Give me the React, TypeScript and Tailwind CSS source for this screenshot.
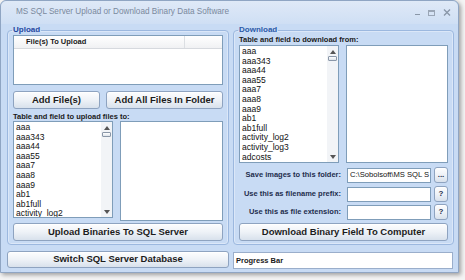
import React from "react";

const upItems = ["aaa", "aaa343", "aaa44", "aaa55", "aaa7", "aaa8", "aaa9", "ab1", "ab1full", "activity_log2"];
const downItems = [...upItems, "activity_log3", "adcosts"];

function Btn({ children, className = "" }: { children: React.ReactNode; className?: string }) {
  return (
    <div
      className={`flex items-center justify-center rounded-[3px] border border-[#8ea3c0] bg-linear-to-b from-[#fdfdfe] via-[#eef2f7] to-[#d8e1ec] font-bold text-[#1c1c1c] shadow-[inset_0_1px_0_#ffffff] ${className}`}
    >
      {children}
    </div>
  );
}

function ListBox({ items, className }: { items: string[]; className: string }) {
  return (
    <div className={`flex w-[100px] shrink-0 overflow-hidden border border-[#7f9db9] bg-white ${className}`}>
      <div className="flex-1 overflow-hidden pl-[2px] pt-[1px] text-[8.5px] leading-[9.6px] text-[#111]">
        {items.map((i) => (
          <div key={i} className="whitespace-nowrap">
            {i}
          </div>
        ))}
      </div>
      <div className="flex w-[11px] flex-col items-center justify-between bg-[#f2f4f7] pb-[3px] pt-[4px]">
        <div className="flex flex-col items-center">
          <svg width="6" height="4" viewBox="0 0 6 4">
            <path d="M0 4 L3 0 L6 4 Z" fill="#555" />
          </svg>
          <div className="mt-[2px] h-[5px] w-[9px] rounded-[1px] border border-[#8a97a8] bg-linear-to-b from-[#ffffff] to-[#dde3ea]" />
        </div>
        <svg width="6" height="4" viewBox="0 0 6 4">
          <path d="M0 0 L6 0 L3 4 Z" fill="#555" />
        </svg>
      </div>
    </div>
  );
}

function Field({ label, value, btn, className }: { label: string; value?: string; btn: string; className: string }) {
  return (
    <div className={`flex h-[16px] items-center ${className}`}>
      <div className="w-[108px] shrink-0 pr-[6px] text-right text-[7.5px] font-bold text-[#1e2d4d] whitespace-nowrap">
        {label}
      </div>
      <div className="flex h-[15px] w-[84px] shrink-0 items-center overflow-hidden border border-[#7f9db9] bg-white pl-[2px] text-[7.6px] text-[#111] whitespace-nowrap">
        {value}
      </div>
      <Btn className="ml-[3px] h-[16px] w-[14px] text-[8px] leading-none text-[#1e2d4d]">{btn}</Btn>
    </div>
  );
}

export default function App() {
  return (
    <div className="relative h-[280px] w-[465px] overflow-hidden bg-[#f4f4f4] font-['Liberation_Sans',Arial,sans-serif]">
      <div className="flex h-[273px] w-[459px] flex-col rounded-t-[6px] border border-[#8fa5c3] bg-[#c8dbf4] shadow-[2px_2px_4px_rgba(0,0,0,0.35)]">
        {/* title bar */}
        <div className="flex h-[23px] shrink-0 items-center rounded-t-[6px] bg-linear-to-b from-[#dfe9f7] to-[#cfdff4] pl-[15px] pr-[6px]">
          <div className="text-[8.2px] text-[#7a899d] whitespace-nowrap">MS SQL Server Upload or Download Binary Data Software</div>
          <div className="ml-auto flex items-center gap-[8px] text-[#8a97a8]">
            <div className="mt-[4px] h-[1.5px] w-[5px] bg-[#8a97a8]" />
            <div className="h-[6px] w-[7px] border border-[#9aa6b6] border-t-2" />
            <svg width="8" height="7" viewBox="0 0 8 7" className="mr-[1px]">
              <path d="M1 0.5 L7 6.5 M7 0.5 L1 6.5" stroke="#8a97a8" strokeWidth="1.4" />
            </svg>
          </div>
        </div>

        {/* body */}
        <div className="flex gap-[4px] pl-[6px] pt-[1px]">
          {/* left column */}
          <div className="flex w-[222px] flex-col">
            <fieldset className="h-[220px] rounded-[4px] border border-[#9cb8df] px-[5px] pb-[3px] shadow-[inset_0_0_0_1px_rgba(255,255,255,0.35)]">
              <legend className="ml-[-1px] px-[1px] text-[8px] font-bold leading-[10px] text-[#1f47a0]">Upload</legend>
              <div className="h-[50px] border border-[#7f9db9] bg-white">
                <div className="flex h-[13px] border-b border-[#d6d9de] bg-linear-to-b from-[#ffffff] to-[#f0f1f3]">
                  <div className="flex w-[171px] items-center border-r border-[#dcdfe3] pl-[12px] text-[7.5px] font-bold text-[#1a1a1a]">
                    File(s) To Upload
                  </div>
                </div>
              </div>
              <div className="mt-[6px] flex h-[18px] gap-[6px]">
                <Btn className="w-[87px] text-[9.5px]">Add File(s)</Btn>
                <Btn className="flex-1 text-[9.5px]">Add All Files In Folder</Btn>
              </div>
              <div className="mt-[3px] h-[9px] text-[7.5px] font-bold leading-[9px] text-[#1a1a1a] whitespace-nowrap">
                Table and field to upload files to:
              </div>
              <div className="flex h-[100px] items-start gap-[7px]">
                <ListBox items={upItems} className="h-[97px]" />
                <div className="h-[100px] flex-1 border border-[#7f9db9] bg-white" />
              </div>
              <Btn className="mt-[2px] h-[18px] text-[9.5px]">Upload Binaries To SQL Server</Btn>
            </fieldset>
            <Btn className="mt-[6px] h-[17px] text-[9.5px]">Switch SQL Server Database</Btn>
          </div>

          {/* right column */}
          <div className="flex w-[220px] flex-col">
            <fieldset className="h-[220px] rounded-[4px] border border-[#9cb8df] px-[5px] pb-[3px] shadow-[inset_0_0_0_1px_rgba(255,255,255,0.35)]">
              <legend className="ml-[-1px] px-[1px] text-[8px] font-bold leading-[10px] text-[#2b5aa8]">Download</legend>
              <div className="h-[10px] text-[7.5px] font-bold leading-[9px] text-[#1a1a1a] whitespace-nowrap">
                Table and field to download from:
              </div>
              <div className="flex h-[118px] gap-[7px]">
                <ListBox items={downItems} className="h-[118px]" />
                <div className="h-[118px] flex-1 border border-[#7f9db9] bg-white" />
              </div>
              <Field className="mt-[4px]" label="Save images to this folder:" value="C:\Sobolsoft\MS SQL S" btn="..." />
              <Field className="mt-[3px]" label="Use this as filename prefix:" btn="?" />
              <Field className="mt-[2px]" label="Use this as file extension:" btn="?" />
              <Btn className="mt-[3px] h-[18px] text-[9.5px]">Download Binary Field To Computer</Btn>
            </fieldset>
            <div className="mt-[7px] flex h-[17px] items-center border border-[#9aaecb] bg-white pl-[2px] text-[7.5px] font-bold text-[#1a1a1a]">
              Progress Bar
            </div>
          </div>
        </div>
      </div>
    </div>
  );
}
